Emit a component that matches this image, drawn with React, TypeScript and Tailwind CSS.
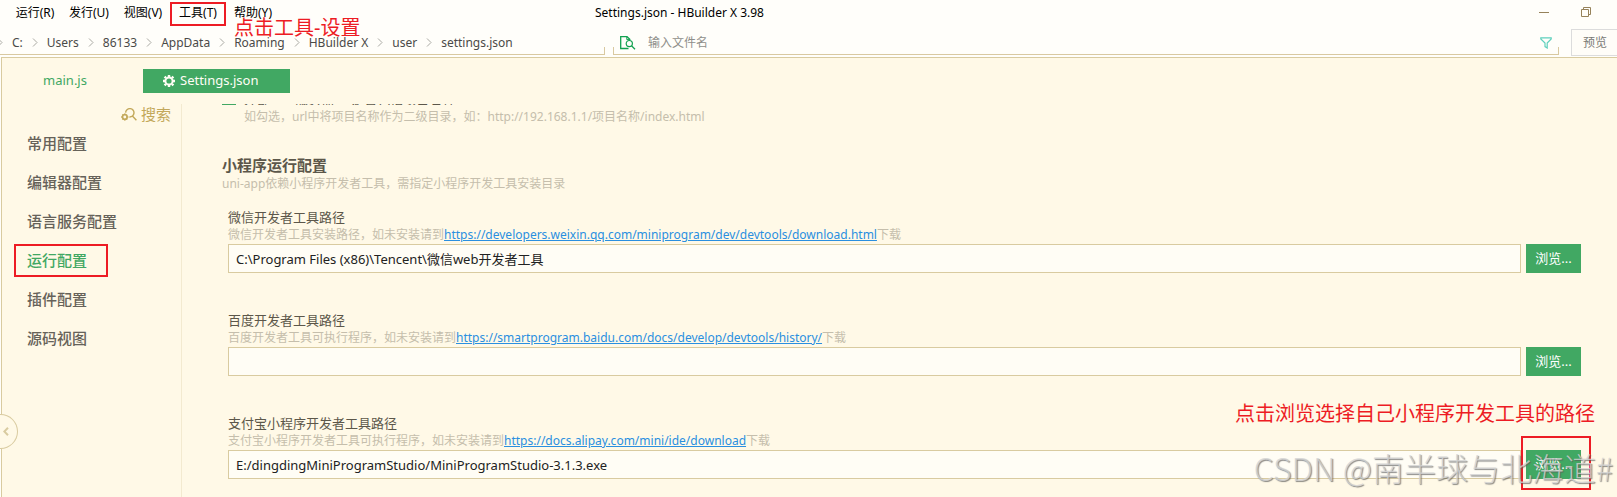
import React, { useState } from 'react';

type PathSetting = {
    id: string;
    label: string;
    hint: string;
    link: string;
    value: string;
    highlighted?: boolean;
};

const menuItems = [
    { label: '运行(R)' },
    { label: '发行(U)' },
    { label: '视图(V)' },
    { label: '工具(T)', highlighted: true },
    { label: '帮助(Y)' },
];

const crumbs = ['C:', 'Users', '86133', 'AppData', 'Roaming', 'HBuilder X', 'user', 'settings.json'];

const navItems = ['常用配置', '编辑器配置', '语言服务配置', '运行配置', '插件配置', '源码视图'];

const pathSettings: PathSetting[] = [
    {
        id: 'weixin',
        label: '微信开发者工具路径',
        hint: '微信开发者工具安装路径，如未安装请到',
        link: 'https://developers.weixin.qq.com/miniprogram/dev/devtools/download.html',
        value: 'C:\\Program Files (x86)\\Tencent\\微信web开发者工具',
    },
    {
        id: 'baidu',
        label: '百度开发者工具路径',
        hint: '百度开发者工具可执行程序，如未安装请到',
        link: 'https://smartprogram.baidu.com/docs/develop/devtools/history/',
        value: '',
    },
    {
        id: 'alipay',
        label: '支付宝小程序开发者工具路径',
        hint: '支付宝小程序开发者工具可执行程序，如未安装请到',
        link: 'https://docs.alipay.com/mini/ide/download',
        value: 'E:/dingdingMiniProgramStudio/MiniProgramStudio-3.1.3.exe',
        highlighted: true,
    },
];

const Chevron: React.FC = () => (
    <svg className="w-[6px] h-[9px] shrink-0" viewBox="0 0 6 9" fill="none" stroke="#a9a9a3">
        <path d="M1 0.5 L5 4.5 L1 8.5" />
    </svg>
);

const GearIcon: React.FC = () => (
    <svg className="w-3 h-3 shrink-0" viewBox="0 0 12 12" fill="none" stroke="#fffdf5">
        <circle cx="6" cy="6" r="3.6" strokeWidth="2" />
        <path
            d="M6 0v2M6 10v2M0 6h2M10 6h2M1.6 1.6l1.4 1.4M9 9l1.4 1.4M1.6 10.4l1.4-1.4M9 3l1.4-1.4"
            strokeWidth="2.4"
        />
    </svg>
);

const SearchIcon: React.FC = () => (
    <svg className="w-4 h-[13px] shrink-0" viewBox="0 0 16 13" fill="none" stroke="#c3a85a" strokeWidth="1.4">
        <path d="M4.6 4.6A4.2 4.2 0 1 1 8.4 9M11.4 8 L15.4 12.2" />
        <circle cx="3.8" cy="9" r="2.3" strokeWidth="1.7" />
        <path d="M3.8 5.4v1.2M3.8 11.4v1.2M0.2 9h1.2M6.2 9h1.2M1.3 6.5l.8.8M5.5 10.7l.8.8M1.3 11.5l.8-.8" />
    </svg>
);

const FileSearchIcon: React.FC = () => (
    <svg className="w-4 h-[14px] shrink-0" viewBox="0 0 16 14" fill="none" stroke="#12a150">
        <path d="M8.5 12.5H0.7V0.7H7L9.8 3.4V4.2" strokeWidth="1.3" />
        <path d="M6.8 0.7V3.6H9.8" />
        <circle cx="9.3" cy="7.6" r="3.1" strokeWidth="1.2" />
        <path d="M11.5 9.8 L15 13.2" strokeWidth="1.3" />
    </svg>
);

const FilterIcon: React.FC = () => (
    <svg className="w-3 h-3 shrink-0" viewBox="0 0 12 12" fill="none" stroke="#5fd0bd" strokeWidth="1.2">
        <path d="M0.8 0.8H11.2V2L7.2 6V11L5 9.6V6L0.8 2Z" />
    </svg>
);

const TitleBar: React.FC = () => (
    <div className="relative flex items-center h-[28px]">
        <nav className="flex items-center pl-2">
            {menuItems.map(item => (
                <button
                    key={item.label}
                    type="button"
                    className={`h-6 pb-[3px] text-xs text-black border-2 ${
                        item.highlighted ? 'w-14 border-[#ed1c24]' : 'w-[54px] border-transparent'
                    }`}
                >
                    {item.label}
                </button>
            ))}
        </nav>
        <h1 className="absolute left-[595px] pb-[3px] text-xs text-black whitespace-nowrap">
            Settings.json - HBuilder X 3.98
        </h1>
        <div className="flex items-center gap-8 ml-auto pr-[26px] pb-1">
            <button type="button" aria-label="最小化" className="w-[10px] h-[10px]">
                <svg className="w-[10px] h-[10px]" viewBox="0 0 10 10" stroke="#96825a">
                    <path d="M0 5.5H10" />
                </svg>
            </button>
            <button type="button" aria-label="还原" className="w-[10px] h-[10px]">
                <svg className="w-[10px] h-[10px]" viewBox="0 0 10 10" fill="none" stroke="#96825a">
                    <path d="M0.5 2.5H7.5V9.5H0.5ZM2.5 2.5V0.5H9.5V7.5H7.5" />
                </svg>
            </button>
        </div>
    </div>
);

const AddressBar: React.FC = () => (
    <div className="flex items-start h-[29px]">
        <div className="flex items-end w-[605px] h-[27px] border-b border-[#d9c9a0]">
            <div className="flex items-center gap-[9px] h-[23px] -ml-[3px] text-xs text-[#4a4a48] whitespace-nowrap">
                {crumbs.map(crumb => (
                    <React.Fragment key={crumb}>
                        <Chevron />
                        <span>{crumb}</span>
                    </React.Fragment>
                ))}
            </div>
            <span className="ml-auto w-px h-[7px] bg-[#d9c9a0]" />
        </div>
        <div className="flex-1 flex items-end h-[27px] ml-2 border-b border-[#d9c9a0]">
            <span className="w-px h-[7px] bg-[#d9c9a0]" />
            <div className="flex-1 flex items-center h-[23px] pl-[6px] pr-[6px]">
                <FileSearchIcon />
                <input
                    type="text"
                    aria-label="输入文件名"
                    placeholder="输入文件名"
                    className="flex-1 ml-3 text-xs bg-transparent outline-none placeholder:text-[#8f8f8a]"
                />
                <FilterIcon />
            </div>
            <span className="w-px h-[7px] bg-[#d9c9a0]" />
        </div>
        <button
            type="button"
            className="w-[46px] h-[27px] mt-px ml-3 pl-[11px] text-left text-xs text-[#7a7a76] border border-r-0 border-[#dcdcdc] bg-[#fffdf8]"
        >
            预览
        </button>
    </div>
);

const PathField: React.FC<{ setting: PathSetting }> = ({ setting }) => {
    const [value, setValue] = useState(setting.value);

    return (
        <div className="pl-[6px] pr-9 mb-[38px]">
            <label htmlFor={setting.id} className="block text-[13px] leading-[18px] text-[#5c574a]">
                {setting.label}
            </label>
            <p className="text-xs leading-[18px] h-[18px] text-[#c5beac] whitespace-nowrap">
                {setting.hint}
                <a href={setting.link} className="text-[#2a8fe0] underline">
                    {setting.link}
                </a>
                下载
            </p>
            <div className="flex gap-[5px]">
                <input
                    id={setting.id}
                    type="text"
                    value={value}
                    onChange={e => setValue(e.target.value)}
                    className="flex-1 h-[29px] px-[7px] text-[13px] text-[#222222] bg-[#fffdf5] border border-[#d9cba0] outline-none"
                />
                <div className="relative">
                    <button type="button" className="w-[55px] h-[29px] text-[13px] text-white bg-[#41a863]">
                        浏览...
                    </button>
                    {setting.highlighted && (
                        <>
                            <span className="absolute -right-[14px] -top-[48px] text-xl leading-6 text-[#ed1c24] whitespace-nowrap">
                                点击浏览选择自己小程序开发工具的路径
                            </span>
                            <span className="absolute -left-[5px] -right-[10px] -top-[14px] h-[54px] border-2 border-[#ed1c24]" />
                        </>
                    )}
                </div>
            </div>
        </div>
    );
};

const App: React.FC = () => {
    const [activeNav, setActiveNav] = useState('运行配置');

    return (
        <div className="relative flex flex-col min-h-screen overflow-hidden bg-[#fffefa] font-['Noto_Sans','Noto_Sans_CJK_SC',sans-serif]">
            <TitleBar />
            <AddressBar />
            <span className="absolute left-[234px] top-4 text-xl leading-6 text-[#ed1c24] whitespace-nowrap">
                点击工具-设置
            </span>

            <div className="relative flex-1 flex flex-col ml-px border-t border-l border-[#d9cba0] bg-[#fff9e7]">
                <div className="flex items-center h-[46px]">
                    <button type="button" className="w-[126px] h-6 text-[13px] text-[#41a863]">
                        main.js
                    </button>
                    <button
                        type="button"
                        className="flex items-center gap-[5px] w-[147px] h-6 ml-[15px] pl-5 text-[13px] text-[#fffdf5] bg-[#41a863]"
                    >
                        <GearIcon />
                        Settings.json
                    </button>
                </div>

                <div className="flex-1 flex">
                    <aside className="w-[180px] shrink-0 border-r border-[#f3ead0]">
                        <button
                            type="button"
                            className="flex items-center gap-1 h-5 ml-auto mr-[10px] text-[15px] text-[#c3a85a]"
                        >
                            <SearchIcon />
                            搜索
                        </button>
                        <ul>
                            {navItems.map(item => (
                                <li key={item} className="flex items-center h-[39px] pl-3">
                                    <button
                                        type="button"
                                        onClick={() => setActiveNav(item)}
                                        className={`h-[33px] px-[11px] text-left text-[15px] font-medium border-2 ${
                                            activeNav === item
                                                ? 'w-[94px] text-[#41a863] border-[#ed1c24]'
                                                : 'text-[#666259] border-transparent'
                                        }`}
                                    >
                                        {item}
                                    </button>
                                </li>
                            ))}
                        </ul>
                    </aside>

                    <main className="flex-1 pl-10">
                        {/* the option scrolled past the top edge, only its last pixels show */}
                        <div className="flex items-end h-px overflow-hidden">
                            <label className="flex items-end gap-2 text-[13px] leading-[12px] text-[#5c574a] whitespace-nowrap">
                                <input
                                    type="checkbox"
                                    defaultChecked
                                    className="appearance-none w-[14px] h-[14px] border border-[#41a863]"
                                />
                                外部web服务器url是否包括项目名称
                            </label>
                        </div>
                        <p className="mt-[2px] pl-[22px] text-xs leading-5 text-[#c5beac]">
                            如勾选，url中将项目名称作为二级目录，如：http://192.168.1.1/项目名称/index.html
                        </p>
                        <h2 className="mt-[27px] text-[15px] leading-[22px] font-bold text-[#5c574a]">小程序运行配置</h2>
                        <p className="mb-4 text-xs leading-4 text-[#c5beac]">
                            uni-app依赖小程序开发者工具，需指定小程序开发工具安装目录
                        </p>
                        {pathSettings.map(setting => (
                            <PathField key={setting.id} setting={setting} />
                        ))}
                    </main>
                </div>

                <button
                    type="button"
                    aria-label="折叠"
                    className="absolute -left-[2px] top-[356px] flex items-center w-[18px] h-[35px] pl-[3px] rounded-r-full border border-l-0 border-[#d9cba0] bg-[#fff9e7]"
                >
                    <svg className="w-[6px] h-[9px]" viewBox="0 0 6 9" fill="none" stroke="#d9cba0" strokeWidth="2">
                        <path d="M5 0.7 L1.3 4.5 L5 8.3" />
                    </svg>
                </button>
            </div>

            <span className="absolute right-1 top-[443px] text-[32px] leading-[48px] font-light text-[#d4d4d4]/80 whitespace-nowrap pointer-events-none [text-shadow:1px_1px_1px_rgba(90,90,90,0.7)] font-['Noto_Sans_CJK_SC',sans-serif]">
                CSDN @南半球与北海道#
            </span>
        </div>
    );
};

export default App;
